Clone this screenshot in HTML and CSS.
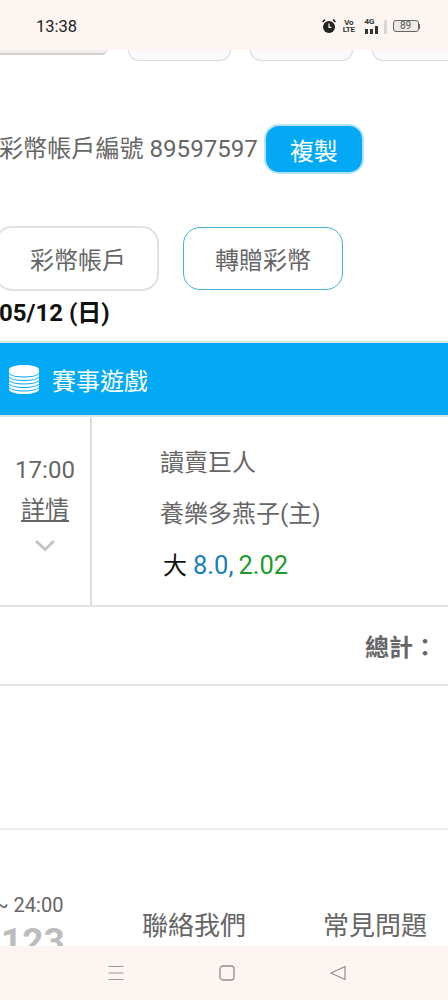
FILE: index.html
```html
<!DOCTYPE html>
<html lang="zh-Hant">
<head>
<meta charset="utf-8">
<title>彩幣帳戶</title>
<link rel="stylesheet" href="styles.css">
</head>
<body>
<div class="screen">
  <header class="status">
    <span class="clock">13:38</span>
    <div class="status-icons">
      <svg class="alarm" width="16" height="16" viewBox="0 0 16 16"><circle cx="8" cy="9" r="6" fill="#222"/><path d="M1.500 4 4 1.600M14.500 4 12 1.600" stroke="#222" stroke-width="1.600" fill="none"/><path d="M8 5.500V9.300H10.500" stroke="#fff" stroke-width="1.200" fill="none"/></svg>
      <span class="volte"><span>Vo</span><span>LTE</span></span>
      <div class="signal">
        <div class="signal-main">
          <span class="net">4G</span>
          <svg width="15" height="8" viewBox="0 0 15 8"><rect x="0" y="3" width="3" height="5" fill="#333"/><rect x="5" y="3" width="3" height="5" fill="#333"/><rect x="10" y="0" width="3" height="8" fill="#333"/></svg>
        </div>
        <span class="signal-empty"></span>
      </div>
      <div class="battery"><span class="battery-body">89</span><span class="battery-tip"></span></div>
    </div>
  </header>

  <main class="content">
    <div class="top-tabs">
      <div class="top-tab first"></div>
      <div class="top-tab"></div>
      <div class="top-tab"></div>
      <div class="top-tab"></div>
    </div>

    <div class="account">
      <span class="account-label">彩幣帳戶編號 89597597</span>
      <button class="copy">複製</button>
    </div>

    <div class="actions">
      <button class="action plain">彩幣帳戶</button>
      <button class="action outlined">轉贈彩幣</button>
    </div>

    <div class="date">05/12 (日)</div>

    <div class="banner">
      <svg class="coins" width="32" height="31" viewBox="0 0 32 31">
        <path d="M1 6C1 2.500 8 1 16 1s15 1.500 15 5v19c0 3.500-7 5-15 5S1 28.500 1 25Z" fill="#fff"/>
        <g fill="none" stroke="#03a9f4" stroke-width="1.100">
          <path d="M1 9.500c2 2.500 8 3.500 15 3.500s13-1 15-3.500"/>
          <path d="M1 13c2 2.500 8 3.500 15 3.500s13-1 15-3.500"/>
          <path d="M1 16.500c2 2.500 8 3.500 15 3.500s13-1 15-3.500"/>
          <path d="M1 20c2 2.500 8 3.500 15 3.500s13-1 15-3.500"/>
          <path d="M1 23.500c2 2.500 8 3.500 15 3.500s13-1 15-3.500"/>
        </g>
      </svg>
      <span>賽事遊戲</span>
    </div>

    <section class="match">
      <div class="match-time">
        <span class="time">17:00</span>
        <a class="detail">詳情</a>
        <svg class="chevron" width="22" height="13" viewBox="0 0 22 13"><path d="M2 2 11 10.500 20 2" fill="none" stroke="#c4c4c4" stroke-width="3"/></svg>
      </div>
      <div class="match-info">
        <div class="team">讀賣巨人</div>
        <div class="team second">養樂多燕子(主)</div>
        <div class="bet"><span class="bet-type">大</span><span class="bet-line">8.0,</span><span class="bet-odds">2.02</span></div>
      </div>
    </section>

    <div class="total">總計：</div>

    <div class="blank"></div>

    <footer class="footer">
      <div class="service">
        <div class="hours">~ 24:00</div>
        <div class="phone">123</div>
      </div>
      <a class="link contact">聯絡我們</a>
      <a class="link faq">常見問題</a>
    </footer>
  </main>

  <nav class="navbar">
    <svg width="18" height="18" viewBox="0 0 18 18"><path d="M1.500 2.500H16.500M1.500 9H16.500M1.500 15.500H16.500" stroke="#9a9a9a" stroke-width="1.200" fill="none"/></svg>
    <svg width="18" height="18" viewBox="0 0 18 18"><rect x="2" y="2" width="14" height="14" rx="3" fill="none" stroke="#8f8f8f" stroke-width="1.300"/></svg>
    <svg width="18" height="18" viewBox="0 0 18 18"><path d="M2 9 16 2.500V15.500Z" fill="none" stroke="#8f8f8f" stroke-width="1.200" stroke-linejoin="round"/></svg>
  </nav>
</div>
</body>
</html>
```

FILE: styles.css
```css
* { box-sizing: border-box; }
html, body { margin: 0; padding: 0; background: #fff; }
body {
  font-family: Roboto, "Noto Sans CJK TC", sans-serif;
  color: #666;
}
.screen {
  width: 448px;
  height: 1000px;
  display: flex;
  flex-direction: column;
  overflow: hidden;
}

/* status bar */
.status {
  height: 50px;
  flex: none;
  background: #fdf5f2;
  display: flex;
  align-items: center;
  justify-content: space-between;
  padding: 2px 28px 0 36px;
}
.clock { font-size: 16.500px; color: #222; font-weight: 400; }
.status-icons { display: flex; align-items: center; }
.alarm { margin-right: 6px; }
.volte {
  display: flex;
  flex-direction: column;
  font-size: 8px;
  line-height: 7.500px;
  font-weight: 700;
  letter-spacing: -0.4px;
  color: #333;
  align-items: center;
  margin-right: 10px;
}
.signal {
  width: 22px;
  height: 16px;
  display: flex;
  justify-content: space-between;
  margin-right: 6px;
}
.signal-main {
  display: flex;
  flex-direction: column;
  align-items: flex-start;
}
.signal-empty { width: 3px; height: 14px; margin-top: 2px; background: #d9d6d4; }
.net { font-size: 8px; line-height: 8px; font-weight: 700; color: #333; }
.battery { display: flex; align-items: center; }
.battery-body {
  width: 26px;
  height: 12px;
  border: 1px solid #666;
  border-radius: 3px;
  background: #eeeae8;
  font-size: 10px;
  line-height: 10px;
  text-align: center;
  color: #555;
}
.battery-tip { width: 1.500px; height: 5px; background: #666; }

/* remnants of the top tabs */
.content { flex: 1; min-height: 0; overflow: hidden; }
.top-tabs {
  height: 11px;
  display: flex;
  gap: 19px;
  align-items: flex-start;
  margin-left: -5px;
}
.top-tab {
  flex: none;
  width: 103px;
  height: 11px;
  border: 1px solid #d9d9de;
  border-top: 0;
  border-radius: 0 0 14px 14px;
  background: #fafafa;
}
.top-tab.first {
  width: 112px;
  height: 5px;
  border-bottom: 2px solid #d3cfcf;
  background: #f1efef;
  margin-right: 2px;
}

/* account number */
.account {
  display: flex;
  align-items: center;
  margin: 63px 0 0 -1px;
}
.account-label { font-size: 24.100px; line-height: 50px; white-space: nowrap; }
.copy {
  width: 100px;
  height: 50px;
  margin-left: 6px;
  padding: 0;
  border: 2px solid #b5e3fa;
  border-radius: 15px;
  background: #03a9f4;
  color: #fff;
  font: inherit;
  font-size: 24px;
}

/* actions */
.actions {
  display: flex;
  gap: 24px;
  align-items: center;
  margin: 52px 0 0 -5px;
}
.action {
  font: inherit;
  font-size: 24px;
  color: #666;
  background: #fff;
  padding: 0;
}
.plain { width: 164px; height: 65px; border: 2px solid #e2e2e2; border-radius: 17px; padding-left: 2px; }
.outlined { width: 160px; height: 63px; border: 1px solid #4ab0d8; border-radius: 17px; }

.date {
  font-size: 24px;
  line-height: 32px;
  font-weight: 700;
  color: #111;
  margin: 6px 0 0 -1px;
}

/* banner */
.banner {
  margin-top: 12px;
  height: 76px;
  background: #03a9f4;
  border-top: 2px solid #d8e6ee;
  border-bottom: 2px solid #d8e6ee;
  display: flex;
  align-items: center;
  color: #fff;
  font-size: 24px;
  padding-left: 8px;
}
.coins { margin-right: 12px; }

/* match */
.match {
  height: 190px;
  display: flex;
  border-bottom: 2px solid #e3e3e3;
}
.match-time {
  width: 92px;
  flex: none;
  border-right: 2px solid #dcdcdc;
  display: flex;
  flex-direction: column;
  align-items: center;
  padding: 32px 0 0 0;
}
.time { font-size: 24px; line-height: 42px; }
.detail {
  font-size: 24px;
  line-height: 38px;
  text-decoration: underline;
  text-underline-offset: 2px;
}
.chevron { margin-top: 10px; }
.match-info { padding: 26px 0 0 68px; font-size: 24px; }
.team { line-height: 40px; }
.team.second { margin-top: 11px; }
.bet { display: flex; gap: 5px; align-items: baseline; line-height: 40px; margin-top: 11px; margin-left: 3px; }
.bet-type { color: #111; margin-right: 1px; }
.bet-line { color: #1a7fb8; font-size: 25.500px; }
.bet-odds { color: #1f9a2c; font-size: 25.500px; }

/* total */
.total {
  height: 79px;
  display: flex;
  align-items: center;
  justify-content: flex-end;
  border-bottom: 2px solid #e3e3e3;
  font-size: 24px;
  font-weight: 700;
  padding-right: 11px;
}
.blank { height: 144px; border-bottom: 2px solid #eeeeee; }

/* footer */
.footer {
  height: 117px;
  display: flex;
  overflow: hidden;
  padding-top: 59px;
}
.service { width: 143px; margin-left: -5px; flex: none; }
.hours { font-size: 20px; line-height: 32px; white-space: nowrap; }
.phone {
  font-size: 37px;
  line-height: 44px;
  font-weight: 700;
  color: #bdbdbd;
  margin-left: 6px;
  margin-top: -1px;
}
.link { font-size: 26px; line-height: 38px; margin-top: 18px; white-space: nowrap; }
.contact { margin-left: 4px; }
.faq { margin-left: 77px; }

/* android navigation */
.navbar {
  height: 54px;
  flex: none;
  background: #fdf5f2;
  display: flex;
  align-items: center;
  padding: 0 0 0 107px;
  gap: 93px;
}
```
